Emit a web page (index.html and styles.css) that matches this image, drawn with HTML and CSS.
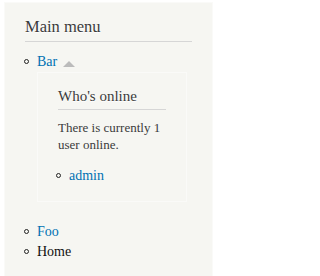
FILE: index.html
```html
<!DOCTYPE html>
<html>
<head>
<meta charset="utf-8">
<link rel="stylesheet" href="styles.css">
</head>
<body>
<div class="block sidebar">
  <h2 class="block-title">Main menu</h2>
  <ul class="menu">
    <li class="item"><a class="link" href="#">Bar</a><span class="toggle"></span>
      <div class="block nested">
        <h2 class="block-title small">Who's online</h2>
        <p class="text">There is currently 1 user online.</p>
        <ul class="menu inner">
          <li class="item"><a class="link" href="#">admin</a></li>
        </ul>
      </div>
    </li>
    <li class="item"><a class="link" href="#">Foo</a></li>
    <li class="item"><span class="active">Home</span></li>
  </ul>
</div>
</body>
</html>
```
FILE: styles.css
```css
html, body {
  background: #ffffff;
}
body {
  margin: 2px 4px 0;
  font-family: "Liberation Serif", "Times New Roman", serif;
  color: #3b3b3b;
}
.block {
  background: #f6f6f2;
  border: 1px solid #fafaf8;
  padding: 15px 20px;
  box-sizing: border-box;
}
.sidebar {
  width: 209px;
  min-height: 274px;
}
.block-title {
  margin: 0 0 10px;
  font-size: 16.5px;
  line-height: 17px;
  font-weight: normal;
  padding-bottom: 6px;
  border-bottom: 1px solid #d6d6d6;
  text-shadow: 0 1px 0 #fff;
  color: #3b3b3b;
}
.block-title.small {
  font-size: 15px;
  line-height: 16px;
  padding-bottom: 5px;
  margin-bottom: 9px;
}
.nested {
  width: 150px;
  margin: 0 0 20px 0;
}
.menu {
  list-style: none;
  margin: 0;
  padding: 0 0 0 12px;
  font-size: 14px;
  line-height: 20px;
}
.menu.inner {
  padding-left: 11px;
}
.item::before {
  content: "";
  display: inline-block;
  width: 3px;
  height: 3px;
  border: 1px solid #222;
  border-radius: 50%;
  margin-left: -13px;
  margin-right: 8px;
  vertical-align: 2px;
}
.link {
  color: #0071b3;
  text-decoration: none;
}
.active {
  color: #111;
}
.toggle {
  display: inline-block;
  width: 0;
  height: 0;
  border-left: 6px solid transparent;
  border-right: 6px solid transparent;
  border-bottom: 6px solid #bbbbbb;
  margin-left: 6px;
  vertical-align: -1px;
}
.text {
  margin: 0 0 13px;
  font-size: 13px;
  line-height: 17px;
}
```
